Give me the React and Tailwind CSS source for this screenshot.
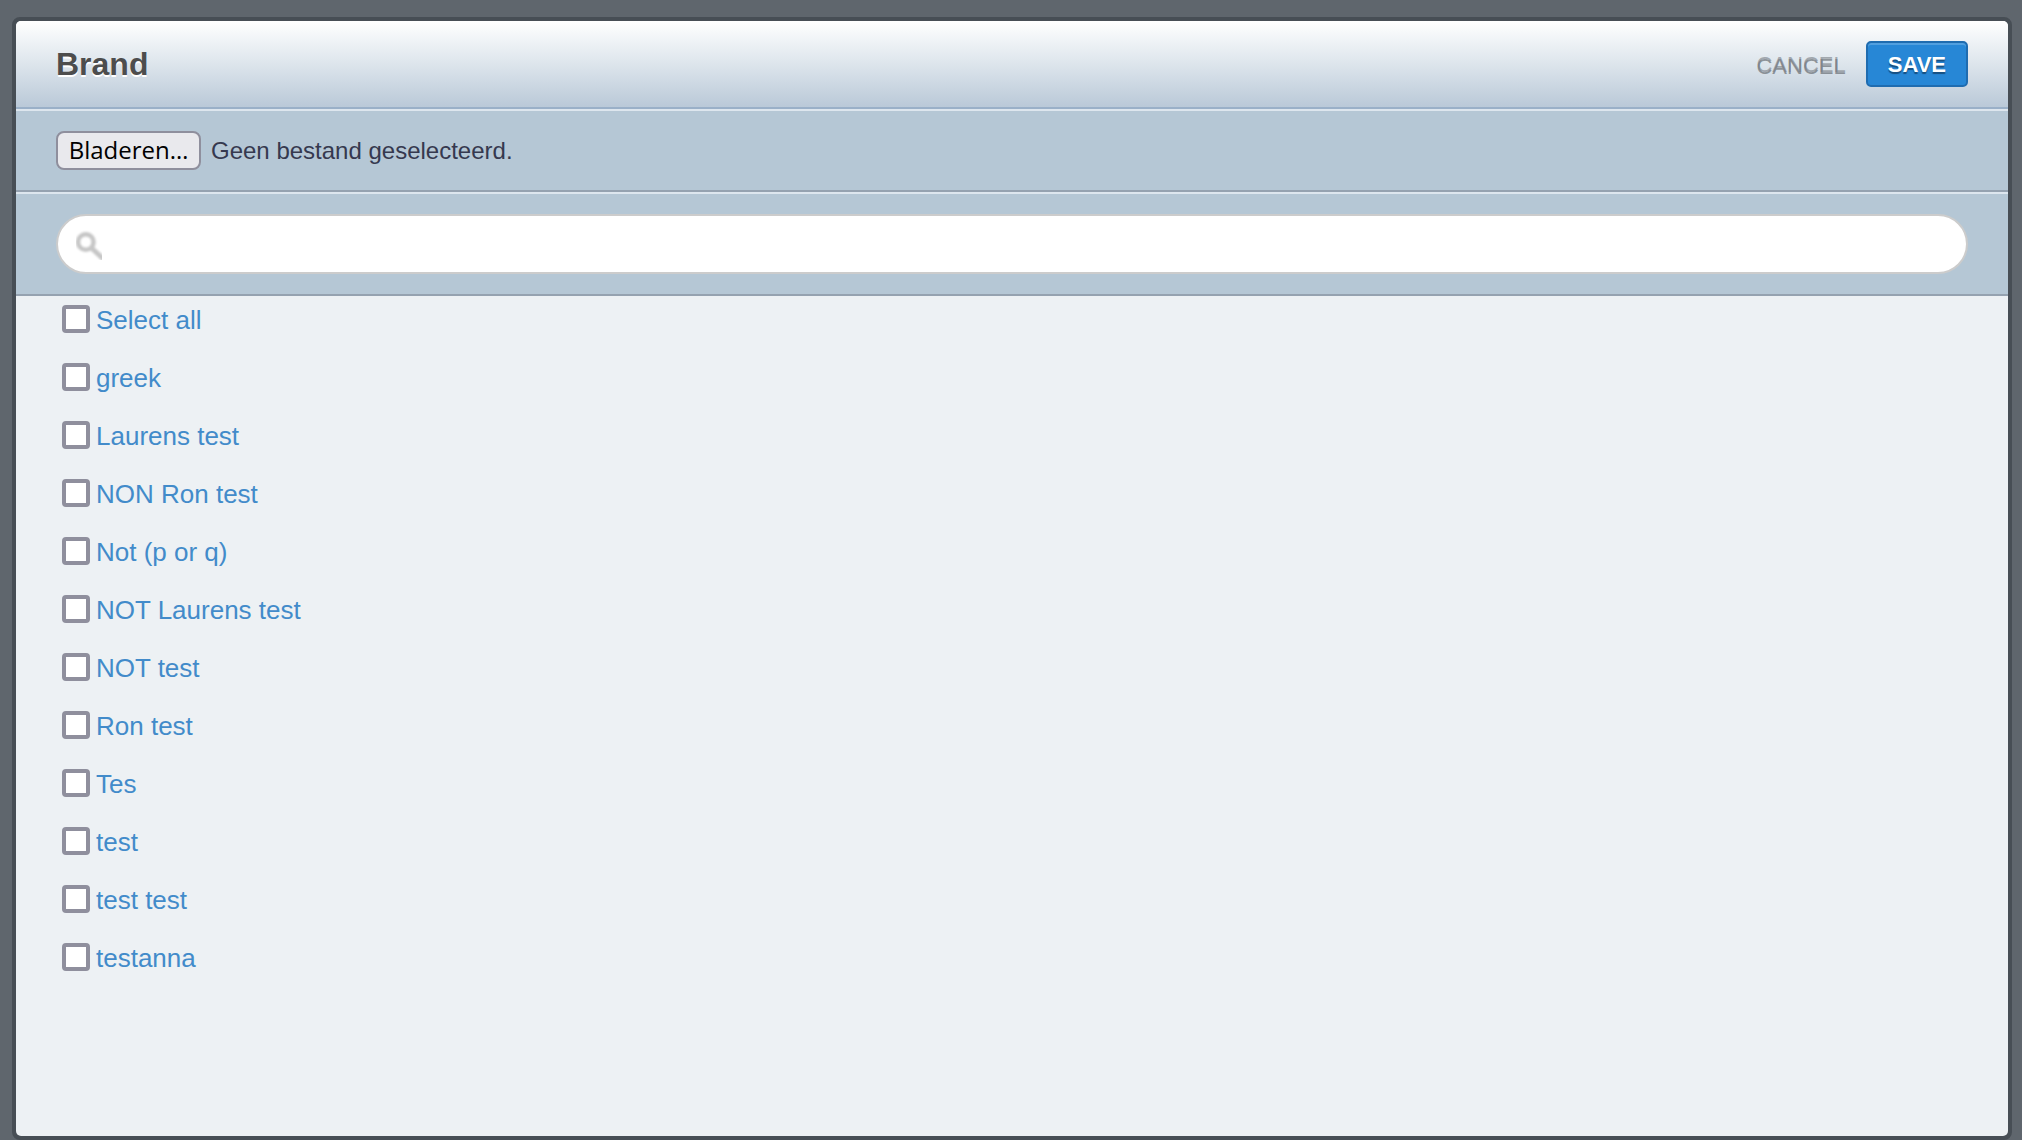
import { useRef, useState } from "react";

const BRANDS = [
  "Select all",
  "greek",
  "Laurens test",
  "NON Ron test",
  "Not (p or q)",
  "NOT Laurens test",
  "NOT test",
  "Ron test",
  "Tes",
  "test",
  "test test",
  "testanna",
];

function SearchIcon() {
  return (
    <svg
      viewBox="0 0 26 30"
      className="pointer-events-none absolute left-5 top-4 h-[30px] w-[26px]"
      fill="none"
      stroke="#c6c6c6"
      aria-hidden="true"
    >
      <g className="blur-[1px]">
        <circle cx="9.8" cy="12" r="7.8" strokeWidth="4.5" />
        <path d="M15.5 18 L28 29.5" strokeWidth="5" />
      </g>
    </svg>
  );
}

function Header() {
  return (
    <header className="flex h-[88px] items-center justify-between border-b-2 border-[#9ab0c8] bg-linear-to-b from-white via-[#dde5ec] to-[#bac9d8] px-10">
      <h1 className="text-[32px] leading-10 font-bold text-[#4d4d4d] [text-shadow:0_2px_0_#fff]">
        Brand
      </h1>
      <div className="flex items-center gap-5">
        <button
          type="button"
          className="pt-0.5 text-[22px] leading-8 text-[#777c8499] [text-shadow:0_2px_0_#565b6199]"
        >
          CANCEL
        </button>
        <button
          type="button"
          className="h-[46px] rounded-[5px] border-2 border-[#1f6cb0] bg-[#2787d6] px-5 pt-0.5 text-[22px] leading-8 font-bold text-white shadow-[inset_0_2px_0_#519fdf] [text-shadow:0_2px_1px_#174f80]"
        >
          SAVE
        </button>
      </div>
    </header>
  );
}

function FileRow() {
  const input = useRef(null);
  const [name, setName] = useState("Geen bestand geselecteerd.");
  return (
    <div className="flex h-[83px] items-center gap-[10px] border-t-2 border-b-2 border-t-[#dde6ee] border-b-[#95a2b0] bg-[#b5c7d5] px-10">
      <input
        ref={input}
        type="file"
        aria-label="Bestand"
        className="hidden"
        onChange={(e) => e.target.files[0] && setName(e.target.files[0].name)}
      />
      <button
        type="button"
        onClick={() => input.current.click()}
        className="h-[39px] w-[145px] rounded-lg border-2 border-[#8f8f9d] bg-[#e9e9ed] pb-0.5 font-['Open_Sans',sans-serif] text-[24px] leading-8 text-black"
      >
        Bladeren…
      </button>
      <span className="text-[24px] leading-8 text-[#35394f]">{name}</span>
    </div>
  );
}

export default function App() {
  return (
    <div className="flex min-h-screen bg-[#5f666d] pt-[17px] pr-[10px] pl-3 font-['Liberation_Sans',Arial,sans-serif]">
      <main className="flex flex-1 flex-col rounded-lg border-4 border-[#474e55] bg-[#474e55]">
        <div className="flex flex-1 flex-col overflow-hidden rounded-[5px] bg-[#edf1f4]">
          <Header />
          <FileRow />
          <div className="border-t-2 border-b-2 border-t-[#dde6ee] border-b-[#95a2b0] bg-[#b5c7d5] px-10 py-5">
            <div className="relative">
              <input
                type="search"
                aria-label="Search"
                className="block h-[60px] w-full rounded-full border-2 border-[#ccc] bg-white pr-6 pl-14 text-[24px] text-[#35394f] outline-none"
              />
              <SearchIcon />
            </div>
          </div>
          <ul className="flex flex-col gap-[30px] px-[46px] pt-[9px] pb-10">
            {BRANDS.map((brand) => (
              <li key={brand} className="flex h-7">
                <label className="flex items-center gap-[6px] text-[26px] leading-7 text-[#428bca]">
                  <input
                    type="checkbox"
                    className="size-7 appearance-none rounded-[4px] border-4 border-[#8f8f9d] bg-white checked:bg-[#428bca]"
                  />
                  <span className="pt-0.5">{brand}</span>
                </label>
              </li>
            ))}
          </ul>
        </div>
      </main>
    </div>
  );
}
